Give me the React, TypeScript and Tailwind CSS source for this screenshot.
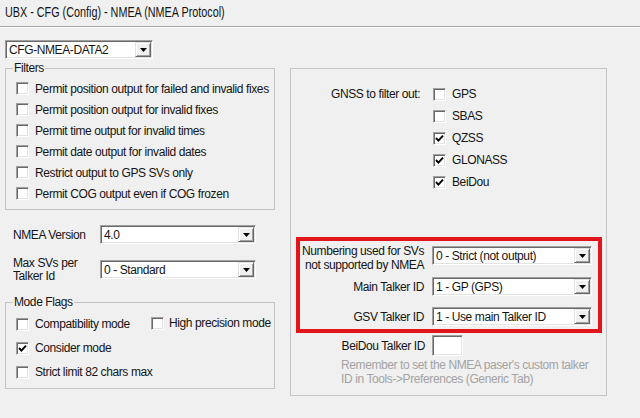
import React from "react";

function Check({ checked }: { checked?: boolean }) {
  return (
    <div className="w-[13px] h-[13px] shrink-0 bg-white border border-t-[#a0a0a0] border-l-[#a0a0a0] border-b-white border-r-white shadow-[inset_1px_1px_0_#696969,inset_-1px_-1px_0_#e3e3e3] flex items-center justify-center">
      {checked && (
        <svg width="9" height="9" viewBox="0 0 9 9">
          <path d="M1 4 L3.4 6.6 L8 1.6" fill="none" stroke="#000" strokeWidth="1.9" />
        </svg>
      )}
    </div>
  );
}

function Combo({ value, w }: { value: string; w: string }) {
  return (
    <div
      className={`${w} h-[19px] shrink-0 bg-white border border-t-[#a0a0a0] border-l-[#a0a0a0] border-b-white border-r-white shadow-[inset_1px_1px_0_#696969,inset_-1px_-1px_0_#e3e3e3] flex items-center pl-[3px] pr-[1px]`}
    >
      <span className="flex-1 whitespace-nowrap overflow-hidden">{value}</span>
      <div className="w-[16px] h-[15px] bg-[#f0f0f0] border border-t-[#e3e3e3] border-l-[#e3e3e3] border-b-[#696969] border-r-[#696969] shadow-[inset_1px_1px_0_#fff,inset_-1px_-1px_0_#a0a0a0] flex items-center justify-center">
        <svg width="7" height="4" viewBox="0 0 7 4">
          <polygon points="0,0 7,0 3.5,4" fill="#000" />
        </svg>
      </div>
    </div>
  );
}

function Row({ checked, label }: { checked?: boolean; label: string }) {
  return (
    <div className="h-[21px] flex items-center gap-[6px] whitespace-nowrap">
      <Check checked={checked} />
      <span>{label}</span>
    </div>
  );
}

export default function App() {
  return (
    <div className="w-[640px] h-[418px] bg-[#f0f0f0] overflow-hidden text-[12px] tracking-[-0.4px] text-[#141414] font-['Liberation_Sans',Arial,sans-serif] leading-[14px]">
      <div className="h-[27px] pl-[5px] pb-[2px] flex items-center border-b border-[#a9a9a9] whitespace-nowrap">
        <span className="inline-block text-[15px] tracking-[0px] origin-left scale-x-[0.72]">
          UBX - CFG (Config) - NMEA (NMEA Protocol)
        </span>
      </div>
      <div className="h-px bg-white" />
      <div className="flex items-start pl-[5px]">
        {/* Left column */}
        <div className="w-[270px] pt-[12px] shrink-0">
          <Combo value="CFG-NMEA-DATA2" w="w-[148px]" />
          <div className="relative mt-[9px] border border-[#c4c4c4] pl-[10px] pt-[9px] pb-[5px]">
            <span className="absolute left-[7px] top-[-8px] bg-[#f0f0f0] px-px">Filters</span>
            <Row label="Permit position output for failed and invalid fixes" />
            <Row label="Permit position output for invalid fixes" />
            <Row label="Permit time output for invalid times" />
            <Row label="Permit date output for invalid dates" />
            <Row label="Restrict output to GPS SVs only" />
            <Row label="Permit COG output even if COG frozen" />
          </div>
          <div className="mt-[15px] h-[19px] flex items-center">
            <span className="w-[95px] pl-[8px]">NMEA Version</span>
            <Combo value="4.0" w="w-[156px]" />
          </div>
          <div className="mt-[16px] h-[19px] flex items-center">
            <span className="w-[95px] pl-[8px] leading-[13px]">
              Max SVs per
              <br />
              Talker Id
            </span>
            <Combo value="0 - Standard" w="w-[156px]" />
          </div>
          <div className="relative mt-[23px] border border-[#c4c4c4] pl-[10px] pt-[9px] pb-[4px]">
            <span className="absolute left-[7px] top-[-8px] bg-[#f0f0f0] px-px">Mode Flags</span>
            <div className="h-[24px] flex items-center whitespace-nowrap">
              <div className="w-[135px] flex items-center gap-[6px]">
                <Check />
                <span>Compatibility mode</span>
              </div>
              <div className="flex items-center gap-[5px] -mt-[2px]">
                <Check />
                <span>High precision mode</span>
              </div>
            </div>
            <div className="h-[24px] flex items-center gap-[6px]">
              <Check checked />
              <span>Consider mode</span>
            </div>
            <div className="h-[24px] flex items-center gap-[6px]">
              <Check />
              <span>Strict limit 82 chars max</span>
            </div>
          </div>
        </div>

        {/* Right column */}
        <div className="ml-[15px] mt-[40px] w-[317px] h-[328px] border border-[#c4c4c4] pt-[14px] shrink-0">
          <div className="flex items-start">
            <div className="w-[142px] pl-[40px] h-[22px] flex items-center whitespace-nowrap">GNSS to filter out:</div>
            <div>
              {[
                ["GPS", false],
                ["SBAS", false],
                ["QZSS", true],
                ["GLONASS", true],
                ["BeiDou", true],
              ].map(([l, c]) => (
                <div key={l as string} className="h-[22px] flex items-center gap-[6px]">
                  <Check checked={c as boolean} />
                  <span>{l as string}</span>
                </div>
              ))}
            </div>
          </div>

          <div className="mt-[44px] ml-[5px] w-[306px] border-4 border-[#e4141c] pt-[5px] pb-[3px]">
            <div className="h-[19px] flex items-start gap-[8px]">
              <span className="w-[124px] text-right whitespace-nowrap -mt-[2px]">
                Numbering used for SVs
                <br />
                not supported by NMEA
              </span>
              <Combo value="0 - Strict (not output)" w="w-[160px]" />
            </div>
            <div className="mt-[12px] h-[19px] flex items-center gap-[8px]">
              <span className="w-[124px] text-right whitespace-nowrap">Main Talker ID</span>
              <Combo value="1 - GP (GPS)" w="w-[160px]" />
            </div>
            <div className="mt-[11px] h-[19px] flex items-center gap-[8px]">
              <span className="w-[124px] text-right whitespace-nowrap">GSV Talker ID</span>
              <Combo value="1 - Use main Talker ID" w="w-[160px]" />
            </div>
          </div>

          <div className="mt-[2px] flex items-center gap-[7px]">
            <span className="w-[134px] text-right whitespace-nowrap">BeiDou Talker ID</span>
            <div className="w-[31px] h-[21px] bg-white border border-t-[#a0a0a0] border-l-[#a0a0a0] border-b-white border-r-white shadow-[inset_1px_1px_0_#696969,inset_-1px_-1px_0_#e3e3e3]" />
          </div>
          <div className="mt-[2px] pl-[50px] text-[#a3a3a3] whitespace-nowrap">
            Remember to set the NMEA paser's custom talker
            <br />
            ID in Tools-&gt;Preferences (Generic Tab)
          </div>
        </div>
      </div>
    </div>
  );
}
